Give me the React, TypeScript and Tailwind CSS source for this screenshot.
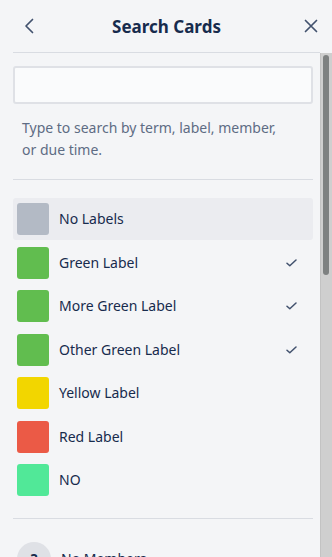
import React from "react";

type Label = { name: string; color: string; checked?: boolean; active?: boolean };

const labels: Label[] = [
  { name: "No Labels", color: "bg-[#b3bac5]", active: true },
  { name: "Green Label", color: "bg-[#61bd4f]", checked: true },
  { name: "More Green Label", color: "bg-[#61bd4f]", checked: true },
  { name: "Other Green Label", color: "bg-[#61bd4f]", checked: true },
  { name: "Yellow Label", color: "bg-[#f2d600]" },
  { name: "Red Label", color: "bg-[#eb5a46]" },
  { name: "NO", color: "bg-[#51e898]" },
];

const members = [
  { initials: "?", name: "No Members" },
  { initials: "AK", name: "Alex Kim (alexkim)" },
  { initials: "JD", name: "Jamie Doe (jamiedoe)" },
];

const dueItems = [
  "No dates",
  "Overdue",
  "Due in the next day",
  "Due in the next week",
  "Due in the next month",
  "Marked as complete",
  "Not marked as complete",
];

function Check() {
  return (
    <svg width="11" height="8" viewBox="0 0 11 8" fill="none" className="shrink-0">
      <path d="M1 4.2 L3.8 6.8 L10 1" stroke="#42526e" strokeWidth="1.5" strokeLinecap="round" strokeLinejoin="round" />
    </svg>
  );
}

function Divider() {
  return <div className="h-px bg-[#d9dce2]" />;
}

export default function App() {
  return (
    <div
      className="w-[332px] h-[557px] flex flex-col bg-[#f4f5f7] text-[#172b4d] overflow-hidden"
      style={{ fontFamily: '"Noto Sans", "Open Sans", sans-serif' }}
    >
      {/* Header */}
      <div className="ml-[13px] mr-[12px] h-[53px] shrink-0 flex items-center justify-between border-b border-[#d9dce2]">
        <button className="w-8 h-8 flex items-center justify-start pl-[11px]">
          <svg width="10" height="16" viewBox="0 0 10 16" fill="none">
            <path d="M8.5 1.5 L2 8 L8.5 14.5" stroke="#42526e" strokeWidth="1.7" strokeLinecap="round" strokeLinejoin="round" />
          </svg>
        </button>
        <h1 className="text-[17px] font-bold leading-none">Search Cards</h1>
        <button className="w-8 h-8 flex items-center justify-end pr-[2px]">
          <svg width="14" height="14" viewBox="0 0 14 14" fill="none">
            <path d="M1.5 1.5 L12.5 12.5 M12.5 1.5 L1.5 12.5" stroke="#42526e" strokeWidth="1.7" strokeLinecap="round" />
          </svg>
        </button>
      </div>

      {/* Body with scrollbar */}
      <div className="flex-1 min-h-0 flex">
        <div className="flex-1 min-w-0 overflow-hidden pl-[13px] pr-[7px]">
          <div className="pt-[13px]">
            <input
              className="block w-full h-[38px] rounded-[3px] border-2 border-[#dfe1e6] bg-[#fafbfc] px-2 text-sm outline-none"
              type="text"
            />
            <p className="mt-[13px] pl-[9px] pr-[20px] text-sm leading-[22px] text-[#5e6c84]">
              Type to search by term, label, member, or due time.
            </p>
          </div>

          <div className="mt-[18px]">
            <Divider />
          </div>

          {/* Labels */}
          <ul className="mt-[18px] flex flex-col gap-[1.5px]">
            {labels.map((l) => (
              <li
                key={l.name}
                className={`h-[42px] flex items-center pl-1 pr-[16px] rounded-[3px] ${l.active ? "bg-[#ebecf0]" : ""}`}
              >
                <span className={`w-[32px] h-[32px] rounded-[3px] shrink-0 ${l.color}`} />
                <span className="ml-[10px] flex-1 text-sm">{l.name}</span>
                {l.checked && <Check />}
              </li>
            ))}
          </ul>

          <div className="mt-[17px]">
            <Divider />
          </div>

          {/* Members */}
          <ul className="mt-[18px] flex flex-col gap-[2px]">
            {members.map((m) => (
              <li key={m.name} className="h-[44px] flex items-center pl-1 pr-[16px] rounded-[3px]">
                <span className="w-[34px] h-[34px] rounded-full shrink-0 flex items-center justify-center text-sm font-bold bg-[#dfe1e6]">
                  {m.initials}
                </span>
                <span className="ml-[10px] flex-1 text-sm">{m.name}</span>
              </li>
            ))}
          </ul>

          <div className="mt-[18px]">
            <Divider />
          </div>

          {/* Due */}
          <ul className="mt-[18px] mb-[18px] flex flex-col gap-[2px]">
            {dueItems.map((d) => (
              <li key={d} className="h-[42px] flex items-center pl-1 pr-[16px] rounded-[3px]">
                <span className="w-[32px] h-[32px] rounded-full shrink-0 flex items-center justify-center bg-[#dfe1e6]">
                  <svg width="16" height="16" viewBox="0 0 16 16" fill="none">
                    <circle cx="8" cy="8" r="6.2" stroke="#42526e" strokeWidth="1.5" />
                    <path d="M8 4.5 V8 L10.5 9.5" stroke="#42526e" strokeWidth="1.5" strokeLinecap="round" />
                  </svg>
                </span>
                <span className="ml-[10px] flex-1 text-sm">{d}</span>
              </li>
            ))}
          </ul>
        </div>

        {/* Scrollbar */}
        <div className="w-[12px] shrink-0 bg-[#cfcfcf] border-l border-[#c3c3c3] pt-[2px] pl-[2px] pr-[3px]">
          <div className="h-[220px] rounded-full bg-[#7e8181]" />
        </div>
      </div>
    </div>
  );
}
